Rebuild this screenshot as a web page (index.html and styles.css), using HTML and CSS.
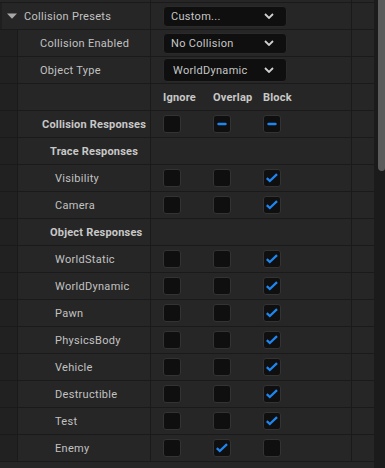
FILE: index.html
```html
<!DOCTYPE html>
<html>
<head>
<meta charset="utf-8">
<link rel="stylesheet" href="styles.css">
</head>
<body>
<div class="frame">
  <div class="panel">
    <div class="row stub"><div class="c name"></div><div class="c val"></div><div class="c ext"></div></div>

    <div class="row">
      <div class="c name top"><svg class="tri" width="10" height="6" viewBox="0 0 10 6"><path d="M0 0.5 H10 L5 5.8 Z" fill="#a8a8a8"/></svg><span class="lbl">Collision Presets</span></div>
      <div class="c val"><div class="dd"><span>Custom...</span><svg class="chev" width="10" height="6" viewBox="0 0 10 6"><path d="M1 1 L5 5 L9 1" fill="none" stroke="#d0d0d0" stroke-width="1.8"/></svg></div></div>
      <div class="c ext"></div>
    </div>

    <div class="row">
      <div class="c name"><div class="strip"></div><span class="lbl l40">Collision Enabled</span></div>
      <div class="c val"><div class="dd"><span>No Collision</span><svg class="chev" width="10" height="6" viewBox="0 0 10 6"><path d="M1 1 L5 5 L9 1" fill="none" stroke="#d0d0d0" stroke-width="1.8"/></svg></div></div>
      <div class="c ext"></div>
    </div>

    <div class="row">
      <div class="c name"><div class="strip"></div><span class="lbl l40">Object Type</span></div>
      <div class="c val"><div class="dd tall"><span>WorldDynamic</span><svg class="chev" width="10" height="6" viewBox="0 0 10 6"><path d="M1 1 L5 5 L9 1" fill="none" stroke="#d0d0d0" stroke-width="1.8"/></svg></div></div>
      <div class="c ext"></div>
    </div>

    <div class="row">
      <div class="c name"><div class="strip"></div></div>
      <div class="c val"><span class="slot hd">Ignore</span><span class="slot hd">Overlap</span><span class="slot hd">Block</span></div>
      <div class="c ext"></div>
    </div>

    <div class="row">
      <div class="c name"><div class="strip"></div><span class="lbl b l42">Collision Responses</span></div>
      <div class="c val">
        <span class="slot"><span class="cb"></span></span>
        <span class="slot"><span class="cb"><svg width="16" height="16" viewBox="0 0 16 16"><path d="M4.5 8 H11.5" stroke="#1f86f0" stroke-width="2.4" stroke-linecap="round"/></svg></span></span>
        <span class="slot"><span class="cb"><svg width="16" height="16" viewBox="0 0 16 16"><path d="M4.5 8 H11.5" stroke="#1f86f0" stroke-width="2.4" stroke-linecap="round"/></svg></span></span>
      </div>
      <div class="c ext"></div>
    </div>

    <div class="row">
      <div class="c name"><div class="strip"></div><span class="lbl b l50">Trace Responses</span></div>
      <div class="c val"></div>
      <div class="c ext"></div>
    </div>

    <div class="row">
      <div class="c name"><div class="strip"></div><span class="lbl l55">Visibility</span></div>
      <div class="c val"><span class="slot"><span class="cb"></span></span><span class="slot"><span class="cb"></span></span><span class="slot"><span class="cb on"></span></span></div>
      <div class="c ext"></div>
    </div>

    <div class="row">
      <div class="c name"><div class="strip"></div><span class="lbl l55">Camera</span></div>
      <div class="c val"><span class="slot"><span class="cb"></span></span><span class="slot"><span class="cb"></span></span><span class="slot"><span class="cb on"></span></span></div>
      <div class="c ext"></div>
    </div>

    <div class="row">
      <div class="c name"><div class="strip"></div><span class="lbl b l50">Object Responses</span></div>
      <div class="c val"></div>
      <div class="c ext"></div>
    </div>

    <div class="row">
      <div class="c name"><div class="strip"></div><span class="lbl l55">WorldStatic</span></div>
      <div class="c val"><span class="slot"><span class="cb"></span></span><span class="slot"><span class="cb"></span></span><span class="slot"><span class="cb on"></span></span></div>
      <div class="c ext"></div>
    </div>

    <div class="row">
      <div class="c name"><div class="strip"></div><span class="lbl l55">WorldDynamic</span></div>
      <div class="c val"><span class="slot"><span class="cb"></span></span><span class="slot"><span class="cb"></span></span><span class="slot"><span class="cb on"></span></span></div>
      <div class="c ext"></div>
    </div>

    <div class="row">
      <div class="c name"><div class="strip"></div><span class="lbl l55">Pawn</span></div>
      <div class="c val"><span class="slot"><span class="cb"></span></span><span class="slot"><span class="cb"></span></span><span class="slot"><span class="cb on"></span></span></div>
      <div class="c ext"></div>
    </div>

    <div class="row">
      <div class="c name"><div class="strip"></div><span class="lbl l55">PhysicsBody</span></div>
      <div class="c val"><span class="slot"><span class="cb"></span></span><span class="slot"><span class="cb"></span></span><span class="slot"><span class="cb on"></span></span></div>
      <div class="c ext"></div>
    </div>

    <div class="row">
      <div class="c name"><div class="strip"></div><span class="lbl l55">Vehicle</span></div>
      <div class="c val"><span class="slot"><span class="cb"></span></span><span class="slot"><span class="cb"></span></span><span class="slot"><span class="cb on"></span></span></div>
      <div class="c ext"></div>
    </div>

    <div class="row">
      <div class="c name"><div class="strip"></div><span class="lbl l55">Destructible</span></div>
      <div class="c val"><span class="slot"><span class="cb"></span></span><span class="slot"><span class="cb"></span></span><span class="slot"><span class="cb on"></span></span></div>
      <div class="c ext"></div>
    </div>

    <div class="row">
      <div class="c name"><div class="strip"></div><span class="lbl l55">Test</span></div>
      <div class="c val"><span class="slot"><span class="cb"></span></span><span class="slot"><span class="cb"></span></span><span class="slot"><span class="cb on"></span></span></div>
      <div class="c ext"></div>
    </div>

    <div class="row">
      <div class="c name"><div class="strip"></div><span class="lbl l55">Enemy</span></div>
      <div class="c val"><span class="slot"><span class="cb"></span></span><span class="slot"><span class="cb on"></span></span><span class="slot"><span class="cb"></span></span></div>
      <div class="c ext"></div>
    </div>
  </div>
  <div class="scroll"><div class="thumb"></div></div>
</div>
</body>
</html>
```

FILE: styles.css
```css
html, body {
  margin: 0;
  padding: 0;
  background: #262626;
}
body {
  width: 385px;
  height: 468px;
  overflow: hidden;
  font-family: Roboto, "Liberation Sans", sans-serif;
  font-size: 11px;
  color: #c2c2c2;
}
.frame {
  display: flex;
  height: 468px;
}
.panel {
  width: 374px;
  display: flex;
  flex-direction: column;
}
.row {
  display: grid;
  grid-template-columns: 150px 200px 22px;
  column-gap: 1px;
  height: 26px;
  background: #1a1a1a;
  border-bottom: 1px solid #1a1a1a;
}
.row.stub {
  height: 2px;
}
.c {
  background: #262626;
  display: flex;
  align-items: center;
  min-width: 0;
}
.name {
  align-items: stretch;
}
.name.top {
  align-items: center;
  border-left: 2px solid #1f1f1f;
}
.tri {
  margin-left: 5px;
  margin-right: 7px;
}
.strip {
  width: 17px;
  flex: none;
  background: #212121;
  border-right: 1px solid #1a1a1a;
}
.lbl {
  white-space: nowrap;
  letter-spacing: 0.3px;
  align-self: center;
}
.lbl.b {
  font-weight: bold;
  color: #c8c8c8;
  letter-spacing: 0.2px;
}
.l40 { margin-left: 22px; }
.l42 { margin-left: 24px; }
.l50 { margin-left: 32px; }
.l55 { margin-left: 37px; }
.val {
  padding-left: 12px;
}
.dd {
  box-sizing: border-box;
  width: 124px;
  height: 21px;
  background: #0f0f0f;
  border: 1px solid #2a2a2a;
  border-radius: 4px;
  display: flex;
  align-items: center;
  justify-content: space-between;
  padding: 0 12px 0 7px;
  letter-spacing: 0.3px;
  color: #c6c6c6;
}
.dd.tall {
  height: 24px;
  padding-left: 9px;
}
.slot {
  width: 50px;
  flex: none;
  display: flex;
  align-items: center;
}
.hd {
  font-weight: bold;
  color: #c8c8c8;
  letter-spacing: 0.2px;
}
.cb {
  box-sizing: border-box;
  width: 18px;
  height: 18px;
  background: #0f0f0f;
  border: 1px solid #333333;
  border-radius: 3px;
  display: flex;
  align-items: center;
  justify-content: center;
}
.cb.on {
  background: #0f0f0f url("data:image/svg+xml,%3Csvg xmlns='http://www.w3.org/2000/svg' width='16' height='16' viewBox='0 0 16 16'%3E%3Cpath d='M2.8 8.2 L5.8 11 L13 4.2' fill='none' stroke='%231f86f0' stroke-width='2.3'/%3E%3C/svg%3E") center / 16px 16px no-repeat;
}
.scroll {
  width: 11px;
  background: #1b1b1b;
  display: flex;
  justify-content: flex-end;
}
.thumb {
  width: 7px;
  height: 171px;
  background: #5b5b5b;
  border-radius: 0 0 3px 4px;
}
```
